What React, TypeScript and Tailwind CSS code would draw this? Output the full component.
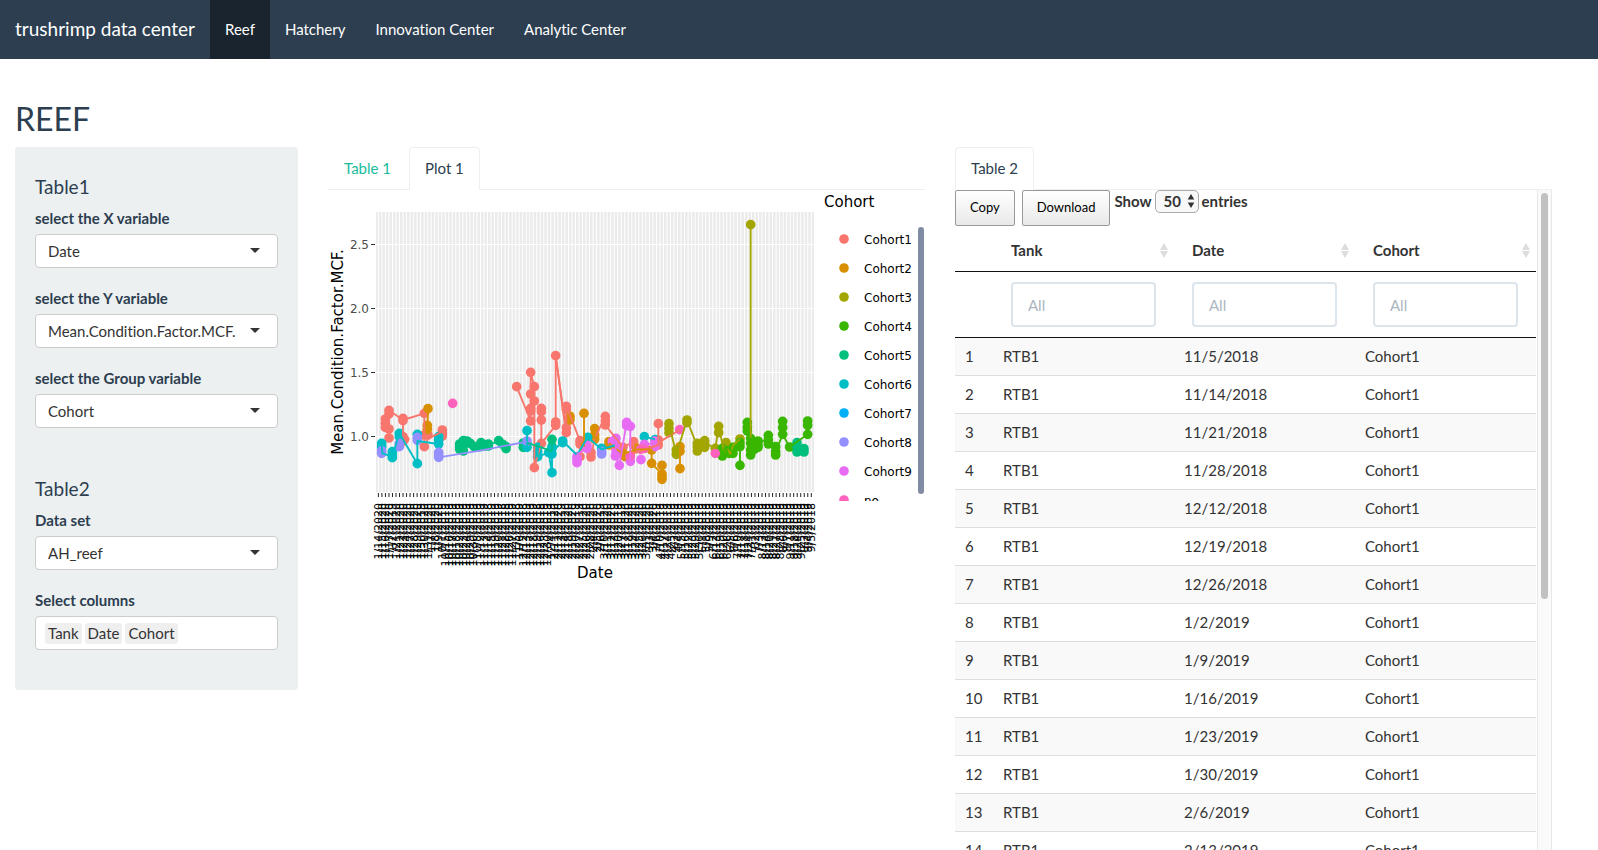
import React, { useState } from "react";

type Pt = [number, number];
type Series = { name: string; color: string; points: Pt[]; lines: Pt[][] };

/* Marker and line coordinates are in thirds of a pixel, relative to (320, 340) of the plot. */
const SERIES: Series[] = [
  {
    name: "Cohort1",
    color: "#F8766D",
    points: [
      [196, 237], [196, 250], [196, 262], [207, 211], [207, 222], [207, 267], [207, 294], [249, 235], [249, 242],
      [249, 290], [254, 298], [249, 304], [313, 220], [313, 285], [313, 320], [324, 285], [367, 270], [367, 280],
      [367, 288], [590, 140], [632, 97], [632, 162], [632, 205], [632, 213], [632, 243], [643, 140], [643, 183],
      [643, 383], [664, 205], [664, 215], [664, 240], [664, 310], [707, 47], [707, 246], [707, 256], [739, 199],
      [739, 208], [739, 263], [739, 278], [780, 302], [780, 312], [780, 350], [813, 338], [813, 351], [856, 229],
      [856, 243], [856, 255], [909, 322], [941, 305], [941, 315], [1015, 251], [1015, 300], [1015, 315],
    ],
    lines: [
      [[196, 260], [196, 237], [207, 211], [249, 240], [313, 220], [313, 320], [324, 296], [367, 275]],
      [[207, 211], [207, 294]],
      [[249, 240], [249, 302]],
      [[590, 140], [632, 243], [632, 97], [643, 140], [643, 383], [664, 310], [664, 205]],
      [[664, 310], [707, 256], [707, 47], [739, 278], [739, 199], [780, 302], [780, 345]],
      [[707, 47], [736, 263]],
      [[813, 350], [824, 295], [856, 229], [856, 255], [909, 322], [941, 305], [941, 340], [1015, 315], [1015, 251]],
      [[1015, 308], [1079, 270]],
    ],
  },
  {
    name: "Cohort2",
    color: "#D89000",
    points: [
      [324, 206], [322, 256], [322, 268], [750, 229], [750, 240], [792, 220], [792, 320], [824, 266], [824, 285],
      [824, 297], [867, 305], [867, 315], [909, 340], [915, 350], [950, 325], [973, 325], [995, 330], [995, 370],
      [1026, 376], [1026, 402], [1026, 410], [1026, 418], [1080, 320], [1080, 334], [1080, 386],
    ],
    lines: [
      [[324, 206], [322, 268]],
      [[792, 220], [792, 320]],
      [[824, 266], [824, 297]],
      [[867, 310], [909, 342], [950, 328], [995, 328], [995, 370], [1026, 402], [1026, 376]],
      [[1080, 320], [1080, 386]],
    ],
  },
  {
    name: "Cohort3",
    color: "#A3A500",
    points: [
      [1047, 251], [1047, 265], [1047, 278], [1069, 330], [1069, 343], [1101, 240], [1101, 248], [1132, 310],
      [1132, 320], [1132, 333], [1154, 302], [1154, 312], [1154, 322], [1186, 325], [1196, 259], [1196, 278],
      [1207, 330], [1218, 308], [1228, 330], [1260, 297], [1292, -346],
    ],
    lines: [
      [[1047, 251], [1069, 343], [1101, 240], [1132, 320], [1154, 308], [1186, 325], [1196, 259], [1212, 335], [1218, 308], [1230, 342], [1240, 315], [1260, 297]],
      [[1292, 293], [1292, -346]],
    ],
  },
  {
    name: "Cohort4",
    color: "#39B600",
    points: [
      [1207, 325], [1207, 340], [1207, 348], [1228, 340], [1239, 322], [1239, 340], [1250, 320], [1260, 308],
      [1260, 320], [1260, 376], [1282, 247], [1282, 262], [1282, 273], [1292, 295], [1292, 310], [1292, 330],
      [1292, 345], [1303, 328], [1314, 303], [1314, 315], [1314, 322], [1345, 286], [1345, 300], [1345, 312],
      [1367, 320], [1367, 335], [1367, 345], [1388, 244], [1388, 263], [1388, 283], [1409, 321], [1463, 243],
      [1463, 256], [1463, 283],
    ],
    lines: [
      [[1207, 340], [1218, 318], [1239, 335], [1260, 310], [1260, 376]],
      [[1282, 247], [1292, 345], [1314, 310], [1345, 296], [1367, 335], [1388, 283], [1388, 244]],
      [[1388, 283], [1409, 321], [1463, 283], [1463, 243]],
    ],
  },
  {
    name: "Cohort5",
    color: "#00BF7D",
    points: [
      [419, 312], [419, 320], [419, 328], [430, 302], [430, 318], [430, 333], [441, 303], [451, 310], [462, 320],
      [473, 321], [483, 308], [483, 320], [494, 318], [505, 312], [505, 318], [536, 302], [547, 312], [558, 320],
      [558, 326], [610, 309], [610, 322], [696, 298], [696, 320], [1431, 308], [1431, 320], [1431, 336],
      [1452, 326], [1452, 336],
    ],
    lines: [
      [[419, 320], [441, 305], [462, 318], [483, 312], [505, 316], [536, 303], [558, 324]],
      [[610, 305], [664, 322], [696, 334], [696, 298]],
      [[1431, 308], [1431, 336], [1452, 330]],
    ],
  },
  {
    name: "Cohort6",
    color: "#00BFC4",
    points: [
      [185, 310], [185, 320], [217, 335], [217, 345], [217, 353], [238, 280], [238, 290], [292, 283], [292, 371],
      [356, 290], [356, 300], [356, 312], [621, 272], [621, 310], [621, 322], [653, 322], [653, 335], [653, 350],
      [686, 338], [696, 325], [696, 342], [696, 398], [728, 303], [728, 308], [803, 292], [845, 325], [973, 290],
      [1005, 299],
    ],
    lines: [
      [[185, 312], [187, 340], [217, 350], [238, 280], [292, 371], [292, 303], [356, 312], [356, 290]],
      [[621, 272], [621, 322]],
      [[653, 322], [653, 350], [686, 338], [696, 398], [696, 338], [728, 303], [771, 345], [803, 292], [845, 328], [888, 315]],
      [[973, 290], [1005, 298]],
    ],
  },
  { name: "Cohort7", color: "#00B0F6", points: [], lines: [] },
  {
    name: "Cohort8",
    color: "#9590FF",
    points: [
      [185, 332], [185, 340], [238, 310], [238, 320], [292, 292], [292, 301], [356, 337], [356, 345], [356, 352],
      [621, 303], [845, 335], [845, 342],
    ],
    lines: [[[356, 352], [480, 332], [621, 305]]],
  },
  {
    name: "Cohort9",
    color: "#E76BF3",
    points: [
      [771, 350], [771, 358], [771, 368], [801, 316], [801, 325], [888, 295], [877, 305], [888, 310], [886, 348],
      [888, 333], [898, 376], [920, 247], [920, 257], [931, 259], [931, 350], [931, 364], [963, 359], [973, 313],
      [1005, 303], [1005, 320],
    ],
    lines: [
      [[771, 368], [771, 345], [801, 320]],
      [[888, 300], [886, 348], [898, 376], [920, 247], [931, 259], [931, 364]],
      [[973, 315], [1005, 308]],
    ],
  },
  {
    name: "no",
    color: "#FF62BC",
    points: [[398, 190], [931, 348], [962, 328], [973, 325], [1079, 269], [1186, 340]],
    lines: [],
  },
];

const day = (month: number, days: string, year: number) => days.split(" ").map((d) => `${month}/${d}/${year}`);

const DATES: string[] = [
  ...day(1, "14 15 16 17", 2020),
  ...day(1, "2", 2019),
  ...day(1, "21 22 23 24 27 28 29", 2020),
  ...day(1, "30", 2019),
  ...day(1, "30 31 7 8 9", 2020),
  ...day(10, "1", 2019),
  ...day(10, "15 16 17 18 22 23 24 29 30", 2019),
  ...day(10, "8", 2019),
  ...day(11, "12 13", 2019),
  ...day(11, "14", 2018),
  ...day(11, "15 19 20", 2019),
  ...day(11, "21 28", 2018),
  ...day(11, "26 27", 2019),
  ...day(11, "5", 2018),
  ...day(11, "6", 2019),
  ...day(12, "12", 2018),
  ...day(12, "13 17 18", 2019),
  ...day(12, "19 26", 2018),
  ...day(12, "23 30", 2019),
  ...day(12, "4", 2019),
  ...day(2, "11 12", 2020),
  ...day(2, "13", 2019),
  ...day(2, "14 18 19", 2020),
  ...day(2, "20 27", 2019),
  ...day(2, "25 26 28", 2020),
  ...day(2, "4 5", 2020),
  ...day(2, "6", 2019),
  ...day(3, "10 11 12", 2020),
  ...day(3, "13 20 27", 2019),
  ...day(3, "17 18 19 24 25 26 31", 2020),
  ...day(3, "3 4", 2020),
  ...day(3, "6", 2019),
  ...day(4, "10 17 24 25", 2019),
  ...day(4, "3 4", 2019),
  ...day(5, "15 16 22 23 29 30", 2019),
  ...day(5, "1 8 9", 2019),
  ...day(6, "12 13 19 20 26", 2019),
  ...day(6, "5 6", 2019),
  ...day(7, "10 17 18 24 31", 2019),
  ...day(7, "2 3", 2019),
  ...day(8, "13 14 20 21 27 28", 2019),
  ...day(8, "6 7", 2019),
  ...day(9, "11 18 24 25", 2019),
  ...day(9, "3 4", 2019),
  ...day(9, "5", 2018),
];

const X0 = 378.4;
const X1 = 811.3;
const tickX = (i: number) => X0 + (i * (X1 - X0)) / (DATES.length - 1);
const Y_TICKS: [string, number][] = [
  ["2.5", 244.5],
  ["2.0", 308.5],
  ["1.5", 372.5],
  ["1.0", 436.5],
];

function Plot() {
  return (
    <svg
      viewBox="328 190 597 400"
      className="block w-full font-['DejaVu_Sans',sans-serif]"
      role="img"
      aria-label="Mean.Condition.Factor.MCF. by Date"
    >
      <defs>
        <clipPath id="legend-clip">
          <rect x="820" y="220" width="106" height="281" />
        </clipPath>
      </defs>
      <rect x="376" y="212" width="438" height="280" fill="#EBEBEB" />
      {DATES.map((d, i) => (
        <line key={d} x1={tickX(i)} x2={tickX(i)} y1="212" y2="492" stroke="#fff" strokeWidth="1" />
      ))}
      {Y_TICKS.map(([t, y]) => (
        <g key={t}>
          <line x1="376" x2="814" y1={y} y2={y} stroke="#fff" strokeWidth="1" />
          <line x1="371" x2="375" y1={y} y2={y} stroke="#333" strokeWidth="1" />
          <text x="369" y={y + 4} textAnchor="end" fontSize="12" fill="#4D4D4D">
            {t}
          </text>
        </g>
      ))}
      {DATES.map((d, i) => (
        <g key={d}>
          <line x1={tickX(i)} x2={tickX(i)} y1="493" y2="497" stroke="#222" strokeWidth="1" />
          <text
            transform={`translate(${tickX(i) + 4} 503) rotate(-90)`}
            textAnchor="end"
            fontSize="11"
            fill="#000"
          >
            {d}
          </text>
        </g>
      ))}
      <g transform="translate(320 340) scale(0.33333)">
        {SERIES.map((s) => (
          <g key={s.name} fill={s.color}>
            {s.points.map(([x, y], i) => (
              <circle key={i} cx={x} cy={y} r="14.5" />
            ))}
          </g>
        ))}
        {SERIES.map((s) => (
          <g key={s.name} fill="none" stroke={s.color} strokeWidth="5.6" strokeLinejoin="round">
            {s.lines.map((l, i) => (
              <polyline key={i} points={l.map((p) => p.join(",")).join(" ")} />
            ))}
          </g>
        ))}
      </g>
      <text transform="translate(343 352) rotate(-90)" textAnchor="middle" fontSize="15">
        Mean.Condition.Factor.MCF.
      </text>
      <text x="595" y="578" textAnchor="middle" fontSize="15">
        Date
      </text>
      <text x="824" y="207" fontSize="15">
        Cohort
      </text>
      <g clipPath="url(#legend-clip)">
        {SERIES.map((s, i) => (
          <g key={s.name}>
            <circle cx="844" cy={239 + i * 29} r="4.8" fill={s.color} />
            <text x="864" y={244 + i * 29} fontSize="12">
              {s.name}
            </text>
          </g>
        ))}
      </g>
      <rect x="918" y="227" width="6" height="267" rx="3" fill="#808BA4" />
    </svg>
  );
}

function SelectField({ id, label, options }: { id: string; label: string; options: string[] }) {
  return (
    <div className="mb-5">
      <label htmlFor={id} className="mb-[5px] block font-bold leading-[21px]">
        {label}
      </label>
      <div className="relative">
        <select
          id={id}
          className="block h-[34px] w-full appearance-none rounded border border-[#ccc] bg-white px-3 text-[#333]"
        >
          {options.map((o) => (
            <option key={o}>{o}</option>
          ))}
        </select>
        <svg viewBox="0 0 10 5" className="pointer-events-none absolute right-[18px] top-[14px] h-[5px] w-[10px]" aria-hidden="true">
          <path d="M0 0h10L5 5z" fill="#333" />
        </svg>
      </div>
    </div>
  );
}

function Tab({ active, onClick, children }: { active?: boolean; onClick?: () => void; children: React.ReactNode }) {
  return (
    <button
      type="button"
      role="tab"
      aria-selected={!!active}
      onClick={onClick}
      className={
        active
          ? "-mb-px mr-[2px] rounded-t border border-[#ecf0f1] border-b-white bg-white px-[15px] py-[10px] leading-[21px] text-[#2c3e50]"
          : "-mb-px mr-[2px] rounded-t border border-transparent px-[15px] py-[10px] leading-[21px] text-[#18bc9c]"
      }
    >
      {children}
    </button>
  );
}

const ROWS = [
  "11/5/2018", "11/14/2018", "11/21/2018", "11/28/2018", "12/12/2018", "12/19/2018", "12/26/2018", "1/2/2019",
  "1/9/2019", "1/16/2019", "1/23/2019", "1/30/2019", "2/6/2019", "2/13/2019", "2/20/2019",
];
const COLUMNS = ["Tank", "Date", "Cohort"];
const NAV = ["Reef", "Hatchery", "Innovation Center", "Analytic Center"];

function DataTable() {
  const dtButton =
    "h-9 rounded-[2px] border border-[#999] bg-linear-to-b from-white to-[#e9e9e9] px-[14px] pb-[2px] text-[13px] text-black";
  return (
    <div className="min-w-0 flex-1 pr-px text-[#333]">
      <div className="flex h-10 items-start">
        <button type="button" className={dtButton + " mr-[7px]"}>Copy</button>
        <button type="button" className={dtButton + " mr-1"}>Download</button>
        <label className="flex items-center gap-[3px] font-bold">
          Show
          <span className="relative block">
            <select className="block h-[23px] w-11 appearance-none rounded-[5px] border border-[#aaa] bg-[#f8f8f8] pl-2 font-bold">
              <option>50</option>
              <option>100</option>
            </select>
            <svg viewBox="0 0 8 14" className="pointer-events-none absolute right-1 top-1 h-[14px] w-2" aria-hidden="true">
              <path d="M4 0l3.3 5.6H.7zM4 14l3.3-5.6H.7z" fill="#333" />
            </svg>
          </span>
          entries
        </label>
      </div>
      <table className="w-full table-fixed border-separate border-spacing-0 text-left">
        <colgroup>
          <col className="w-[38px]" />
          <col />
          <col />
          <col />
        </colgroup>
        <thead>
          <tr>
            <th className="h-[42px] border-b border-[#111]" />
            {COLUMNS.map((c) => (
              <th key={c} className="h-[42px] border-b border-[#111] pl-[18px] pr-[6px] font-bold">
                <span className="flex items-center justify-between">
                  {c}
                  <svg viewBox="0 0 8 15" className="h-[15px] w-2" aria-hidden="true">
                    <path d="M4 0l4 7H0zM4 15l4-7H0z" fill="#ddd" />
                  </svg>
                </span>
              </th>
            ))}
          </tr>
          <tr>
            <td className="h-[66px] border-b border-[#111]" />
            {COLUMNS.map((c) => (
              <td key={c} className="h-[66px] border-b border-[#111] px-[18px]">
                <input
                  type="search"
                  aria-label={`Filter ${c}`}
                  placeholder="All"
                  className="block h-[45px] w-full rounded border-2 border-[#dce4ec] bg-white px-[15px] placeholder:text-[#acb6c0]"
                />
              </td>
            ))}
          </tr>
        </thead>
        <tbody>
          {ROWS.map((date, i) => (
            <tr key={date} className="odd:bg-[#f9f9f9]">
              <td className="h-[38px] border-b border-[#ddd] pl-[10px]">{i + 1}</td>
              <td className="border-b border-[#ddd] pl-[10px]">RTB1</td>
              <td className="border-b border-[#ddd] pl-[10px]">{date}</td>
              <td className="border-b border-[#ddd] pl-[10px]">Cohort1</td>
            </tr>
          ))}
        </tbody>
      </table>
    </div>
  );
}

export default function App() {
  const [tab, setTab] = useState("Plot 1");
  return (
    <div className="flex h-screen flex-col overflow-hidden bg-white font-['Lato',sans-serif] text-[15px] leading-[21px] text-[#2c3e50] [font-variant-ligatures:none]">
      <nav className="flex h-[59px] shrink-0 items-stretch bg-[#2c3e50] text-white">
        <a href="#home" className="flex items-center px-[15px] pb-[2px] text-[19px]">
          trushrimp data center
        </a>
        {NAV.map((n) => (
          <a
            key={n}
            href={"#" + n.split(" ")[0].toLowerCase()}
            className={n === "Reef" ? "flex items-center bg-[#1a242f] px-[15px]" : "flex items-center px-[15px]"}
          >
            {n}
          </a>
        ))}
      </nav>
      <main className="flex min-h-0 flex-1 flex-col pl-[15px] pr-[46px] pt-[42px]">
        <h2 className="mb-[11px] text-[32px] leading-[35px]">REEF</h2>
        <div className="grid min-h-0 flex-1 grid-cols-[minmax(0,283fr)_minmax(0,597fr)_minmax(0,597fr)] grid-rows-[minmax(0,1fr)] gap-x-[30px]">
          <aside className="self-start rounded bg-[#ecf0f1] px-5 pb-5 pt-[29px]">
            <h4 className="mb-[11px] text-[19px] leading-[21px]">Table1</h4>
            <SelectField id="x-var" label="select the X variable" options={["Date"]} />
            <SelectField id="y-var" label="select the Y variable" options={["Mean.Condition.Factor.MCF."]} />
            <SelectField id="group-var" label="select the Group variable" options={["Cohort"]} />
            <h4 className="mb-[11px] mt-[50px] text-[19px] leading-[21px]">Table2</h4>
            <SelectField id="data-set" label="Data set" options={["AH_reef"]} />
            <div className="mb-5">
              <label htmlFor="columns" className="mb-[5px] block font-bold leading-[21px]">
                Select columns
              </label>
              <div className="flex h-[34px] items-center gap-[3px] rounded border border-[#ccc] bg-white px-[9px] text-[#333]">
                {COLUMNS.map((c) => (
                  <span key={c} className="rounded-[3px] bg-[#efefef] px-[3px]">
                    {c}
                  </span>
                ))}
                <input id="columns" className="w-0 min-w-0 flex-1 outline-none" />
              </div>
            </div>
          </aside>
          <section>
            <div role="tablist" className="flex border-b border-[#ecf0f1]">
              {["Table 1", "Plot 1"].map((t) => (
                <Tab key={t} active={tab === t} onClick={() => setTab(t)}>
                  {t}
                </Tab>
              ))}
            </div>
            {tab === "Plot 1" && <Plot />}
          </section>
          <section className="flex min-h-0 flex-col">
            <div role="tablist" className="flex border-b border-[#ecf0f1]">
              <Tab active>Table 2</Tab>
            </div>
            <div className="flex min-h-0 flex-1 overflow-hidden">
              <DataTable />
              <div className="w-[15px] shrink-0 border-x border-[#e8e8e8] bg-[#fafafa] px-[3px] pt-[3px]">
                <div className="h-[406px] rounded-full bg-[#c1c1c1]" />
              </div>
            </div>
          </section>
        </div>
      </main>
    </div>
  );
}
